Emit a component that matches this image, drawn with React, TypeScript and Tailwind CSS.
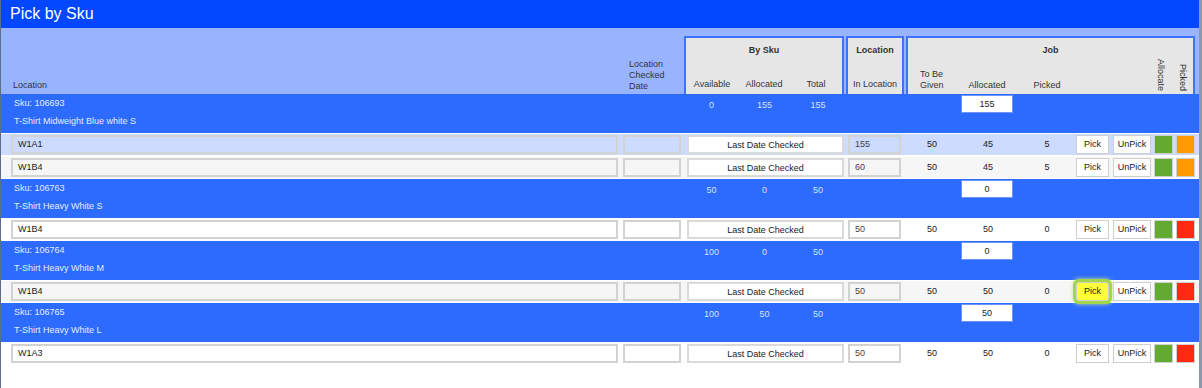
import React from 'react';

type Row = {
  loc: string;
  inLoc: number;
  given: number;
  allocated: number;
  picked: number;
  state: 'orange' | 'red';
  focus?: boolean;
};

type Group = {
  sku: string;
  name: string;
  available: number;
  allocated: number;
  total: number;
  job: number;
  rows: Row[];
};

const groups: Group[] = [
  {
    sku: '106693', name: 'T-Shirt Midweight Blue white S', available: 0, allocated: 155, total: 155, job: 155,
    rows: [
      { loc: 'W1A1', inLoc: 155, given: 50, allocated: 45, picked: 5, state: 'orange' },
      { loc: 'W1B4', inLoc: 60, given: 50, allocated: 45, picked: 5, state: 'orange' },
    ],
  },
  {
    sku: '106763', name: 'T-Shirt Heavy White S', available: 50, allocated: 0, total: 50, job: 0,
    rows: [{ loc: 'W1B4', inLoc: 50, given: 50, allocated: 50, picked: 0, state: 'red' }],
  },
  {
    sku: '106764', name: 'T-Shirt Heavy White M', available: 100, allocated: 0, total: 50, job: 0,
    rows: [{ loc: 'W1B4', inLoc: 50, given: 50, allocated: 50, picked: 0, state: 'red', focus: true }],
  },
  {
    sku: '106765', name: 'T-Shirt Heavy White L', available: 100, allocated: 50, total: 50, job: 50,
    rows: [{ loc: 'W1A3', inLoc: 50, given: 50, allocated: 50, picked: 0, state: 'red' }],
  },
];

const rowBg = ['bg-[#ccdbff]', 'bg-[#f6f6f6]', 'bg-white'];

const input = 'h-[19px] border-2 border-[#d2d2d2] text-[9px] leading-[15px] text-[#1a1a1a] px-[5px]';
const btn = 'h-[19px] border border-[#cfcfcf] text-[9px] leading-[17px] text-[#1a1a1a] text-center';

const SkuRow: React.FC<{ g: Group }> = ({ g }) => (
  <div className="flex h-[39px] bg-[#2d6bff] text-[9px]">
    <div className="w-[620px] pl-[13px] text-[#e4ebff] leading-[18px]">
      <div>Sku: {g.sku}</div>
      <div>{g.name}</div>
    </div>
    <div className="w-[64px]" />
    <div className="w-[160px] flex text-[#d4e0ff] leading-[22px]">
      <div className="w-[53px] text-center">{g.available}</div>
      <div className="w-[53px] text-center">{g.allocated}</div>
      <div className="w-[54px] text-center">{g.total}</div>
    </div>
    <div className="w-[61px]" />
    <div className="w-[52px]" />
    <div className="w-[60px] pt-[1px]">
      <div className="ml-[3px] w-[52px] h-[18px] bg-white border border-[#6c94ff] text-center text-[#1a1a1a] leading-[16px]">{g.job}</div>
    </div>
  </div>
);

const DataRow: React.FC<{ r: Row; idx: number }> = ({ r, idx }) => {
  const bg = idx === 0 ? rowBg[0] : idx % 2 === 1 ? rowBg[1] : rowBg[2];
  return (
    <div className={`flex h-[23px] items-center border-y border-white ${bg} text-[9px] text-[#1a1a1a]`}>
      <div className="w-[620px]">
        <div className={`ml-[10px] w-[607px] ${input}`}>{r.loc}</div>
      </div>
      <div className="w-[64px]">
        <div className={`ml-[2px] w-[58px] ${input}`} />
      </div>
      <div className="w-[160px]">
        <div className={`ml-[2px] w-[157px] bg-white ${btn} border-2 border-[#dadada] leading-[15px]`}>Last Date Checked</div>
      </div>
      <div className="w-[61px]">
        <div className={`ml-[3px] w-[53px] ${input} text-[#444]`}>{r.inLoc}</div>
      </div>
      <div className="w-[52px] text-center">{r.given}</div>
      <div className="w-[60px] text-center">{r.allocated}</div>
      <div className="w-[58px] text-center">{r.picked}</div>
      <div className="w-[36px]">
        <div
          className={`w-[33px] ${btn} ${r.focus ? 'bg-[#fdfd3a] rounded-[3px] shadow-[0_0_0_3px_#a3d64a,0_0_4px_3px_#c6e68a]' : 'bg-white'}`}
        >
          Pick
        </div>
      </div>
      <div className="w-[41px]">
        <div className={`ml-[1px] w-[38px] bg-white ${btn}`}>UnPick</div>
      </div>
      <div className="w-[22px]">
        <div className="ml-[1px] w-[19px] h-[19px] bg-[#62aa30] border border-[#d0d0d0]" />
      </div>
      <div className="w-[24px]">
        <div className={`ml-[1px] w-[19px] h-[19px] border border-[#d0d0d0] ${r.state === 'orange' ? 'bg-[#ff9a00]' : 'bg-[#ff2a12]'}`} />
      </div>
    </div>
  );
};

const App: React.FC = () => {
  let idx = 0;
  return (
    <div className="w-[1202px] h-[388px] overflow-hidden bg-white border-l border-l-[#5d6d8c] border-r-[3px] border-r-[#8c98ab] font-['Liberation_Sans',Arial,sans-serif]">
      <div className="h-[28px] bg-[#0047ff] text-white text-[16px] leading-[28px] pl-[9px]">Pick by Sku</div>

      <div className="flex h-[66px] items-end bg-[#99b4ff] text-[9px] text-[#333]">
        <div className="w-[620px] pl-[12px] pb-[2px] leading-[13px]">Location</div>
        <div className="w-[63px] pl-[8px] pb-[2px] leading-[11px]">
          <div>Location</div>
          <div>Checked</div>
          <div>Date</div>
        </div>
        <div className="w-[160px] h-[58px] flex flex-col justify-between bg-[#e6e6e6] border-2 border-b-0 border-[#3f73ff]">
          <div className="text-center font-bold pt-[6px] leading-[13px]">By Sku</div>
          <div className="flex pb-[3px] leading-[13px]">
            <div className="w-[52px] text-center">Available</div>
            <div className="w-[52px] text-center">Allocated</div>
            <div className="w-[52px] text-center">Total</div>
          </div>
        </div>
        <div className="ml-[2px] w-[58px] h-[58px] flex flex-col justify-between bg-[#e6e6e6] border-2 border-b-0 border-[#3f73ff]">
          <div className="text-center font-bold pt-[6px] leading-[13px]">Location</div>
          <div className="text-center pb-[3px] leading-[13px]">In Location</div>
        </div>
        <div className="ml-[2px] w-[289px] h-[58px] flex flex-col bg-[#e6e6e6] border-2 border-b-0 border-[#3f73ff]">
          <div className="text-center font-bold pt-[6px] leading-[13px]">Job</div>
          <div className="flex flex-1 items-end pb-[2px]">
            <div className="w-[48px] pl-[12px] leading-[11px] pb-[1px]">
              <div>To Be</div>
              <div>Given</div>
            </div>
            <div className="w-[62px] text-center leading-[13px]">Allocated</div>
            <div className="w-[58px] text-center leading-[13px]">Picked</div>
            <div className="w-[74px]" />
            <div className="w-[21px] flex justify-center pb-[1px]">
              <span className="[writing-mode:vertical-rl] leading-[13px]">Allocate</span>
            </div>
            <div className="w-[22px] flex justify-center pb-[1px]">
              <span className="[writing-mode:vertical-rl] leading-[13px]">Picked</span>
            </div>
          </div>
        </div>
      </div>

      {groups.map(g => (
        <div key={g.sku}>
          <SkuRow g={g} />
          {g.rows.map((r, i) => {
            const k = idx++;
            return <DataRow key={i} r={r} idx={k} />;
          })}
        </div>
      ))}
    </div>
  );
};

export default App;
